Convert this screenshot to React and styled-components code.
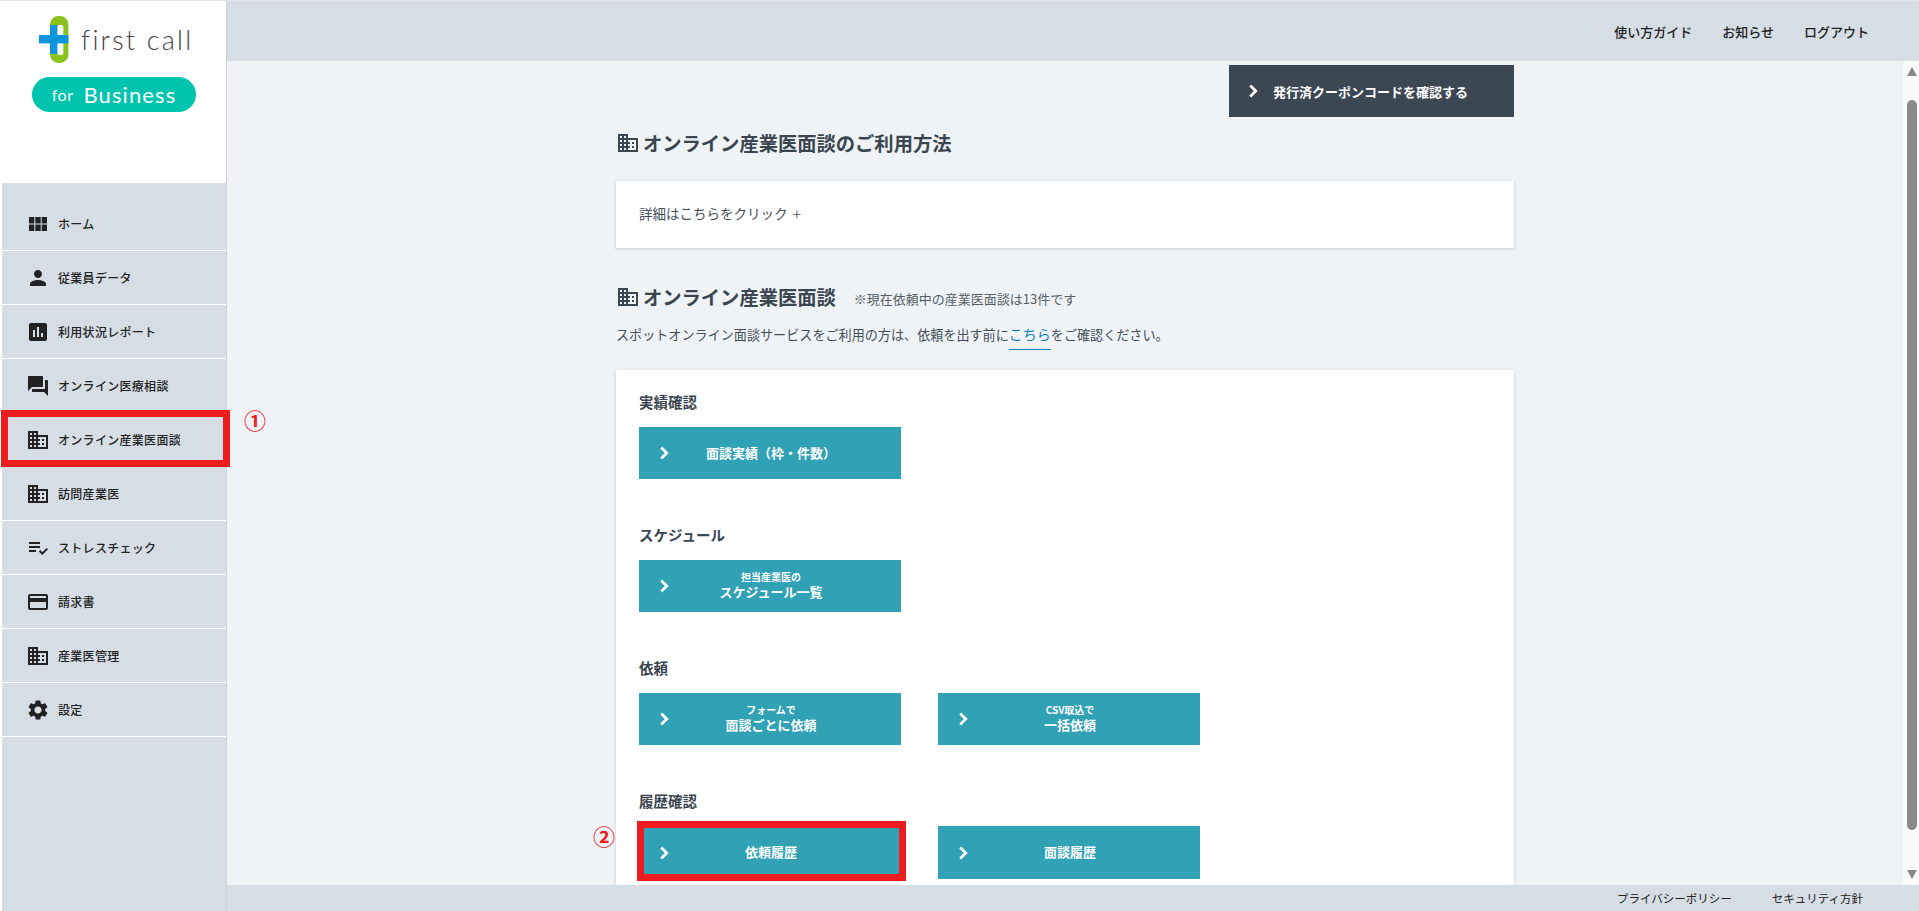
import React from "react";
import styled, { createGlobalStyle } from "styled-components";
import {
  MdViewModule,
  MdPerson,
  MdAssessment,
  MdQuestionAnswer,
  MdDomain,
  MdPlaylistAddCheck,
  MdCreditCard,
  MdSettings,
} from "react-icons/md";

const Global = createGlobalStyle`
  html, body, #root { margin: 0; height: 100%; }
  body {
    overflow: hidden;
    font-family: "Noto Sans CJK JP", "Noto Sans", sans-serif;
    color: #3a4550;
  }
  * { box-sizing: border-box; }
`;

const RED = "#ec1c1f";

const Page = styled.div`
  height: 911px;
  border-top: 1px solid #e4e4e4;
  display: grid;
  grid-template-columns: 227px 1fr;
  background: #fff;
`;

const Side = styled.aside`
  display: flex;
  flex-direction: column;
  padding-left: 2px;
  border-right: 1px solid #cfd2d6;
  height: 910px;
`;

const LogoBox = styled.div`
  height: 182px;
  margin-left: -2px;
  padding: 15px 0 0 32px;
  background: #fff;
`;

const LogoRow = styled.div`
  display: flex;
  align-items: center;
  gap: 12px;
  padding-left: 7px;
`;

const LogoName = styled.span`
  font-family: "Lato", sans-serif;
  font-weight: 300;
  font-size: 27px;
  letter-spacing: 2.2px;
  color: #4a4141;
  line-height: 1;
`;

const Pill = styled.div`
  width: 164px;
  height: 35px;
  margin-top: 14px;
  border-radius: 18px;
  background: #00c4ae;
  color: #fff;
  font-family: "Lato", sans-serif;
  display: flex;
  align-items: center;
  justify-content: center;
  gap: 10px;
`;

const PillSmall = styled.span`
  font-size: 16px;
  letter-spacing: 0.5px;
`;

const PillBig = styled.span`
  font-size: 22px;
  letter-spacing: 1.1px;
`;

const Nav = styled.nav`
  flex: 1;
  background: #d6dde5;
  padding-top: 14px;
  width: 224px;
`;

const NavRow = styled.a`
  position: relative;
  display: flex;
  align-items: center;
  height: 54px;
  padding-left: 24px;
  border-bottom: 1px solid #fff;
  color: #222;
  font-size: 12px;
  font-weight: 500;
  letter-spacing: 0.3px;
  svg {
    width: 24px;
    height: 24px;
    margin-right: 8px;
    color: #222;
    flex: none;
  }
`;

const NavBox = styled.span`
  position: absolute;
  left: -1px;
  right: -4px;
  top: -3px;
  bottom: -1px;
  border: 7px solid ${RED};
`;

const Mark = styled.span`
  position: absolute;
  color: ${RED};
  font-size: 22px;
  line-height: 1;
  font-weight: 700;
`;

const NavMark = styled(Mark)`
  left: 242px;
  top: -5px;
`;

const Right = styled.div`
  display: flex;
  flex-direction: column;
  height: 910px;
  min-width: 0;
`;

const Top = styled.header`
  height: 60px;
  flex: none;
  background: #d6dde5;
  display: flex;
  align-items: center;
  justify-content: flex-end;
  gap: 30px;
  padding-right: 50px;
  font-size: 13px;
  font-weight: 500;
  color: #222;
`;

const Middle = styled.div`
  flex: 1;
  min-height: 0;
  display: flex;
`;

const Main = styled.main`
  flex: 1;
  min-width: 0;
  overflow: hidden;
  background: #eff3f6;
  padding: 4px 0 0 389px;
`;

const Col = styled.div`
  width: 898px;
`;

const CouponRow = styled.div`
  display: flex;
  justify-content: flex-end;
`;

const Coupon = styled.a`
  width: 285px;
  height: 52px;
  background: #3b4753;
  color: #fff;
  font-size: 13px;
  font-weight: 700;
  display: flex;
  align-items: center;
  padding-left: 13px;
  gap: 9px;
`;

const Chevron = styled.svg.attrs({ viewBox: "0 0 24 24" })`
  width: 22px;
  height: 22px;
  flex: none;
  fill: none;
  stroke: currentColor;
  stroke-width: 3;
`;

const BtnChevron = styled(Chevron)`
  position: absolute;
  left: 14px;
  top: 50%;
  transform: translateY(-50%);
`;

const Title = styled.h2`
  margin: ${(p) => p.$top}px 0 0 1px;
  display: flex;
  align-items: center;
  height: 28px;
  font-size: 19.3px;
  font-weight: 700;
  color: #3a4550;
  white-space: nowrap;
  svg { width: 24px; height: 24px; margin-right: 3px; margin-left: -1px; flex: none; }
`;

const Note = styled.span`
  margin-left: 18px;
  font-size: 13px;
  font-weight: 400;
  color: #555e67;
  position: relative;
  top: 1px;
`;

const Panel = styled.section`
  background: #fff;
  box-shadow: 0 1px 3px rgba(60, 70, 80, 0.22);
`;

const DetailPanel = styled(Panel)`
  margin-top: 24px;
  height: 67px;
  padding: 0 23px 3px;
  display: flex;
  align-items: center;
  font-size: 13.5px;
  color: #444e58;
`;

const Plus = styled.span`
  margin-left: 5px;
  font-size: 16px;
  font-weight: 300;
`;

const Lead = styled.p`
  margin: 13px 0 0;
  font-size: 13.1px;
  line-height: 20px;
  color: #444e58;
`;

const LeadLink = styled.a`
  color: #1480b8;
  font-size: 14px;
  padding-bottom: 5px;
  border-bottom: 1px solid #1480b8;
`;

const ButtonPanel = styled(Panel)`
  margin-top: 25px;
  padding: 19px 23px 40px;
`;

const Group = styled.div`
  height: 133px;
`;

const GroupHead = styled.h3`
  margin: 0;
  height: 26px;
  line-height: 26px;
  font-size: 14.5px;
  font-weight: 700;
  color: #3a4550;
`;

const Buttons = styled.div`
  margin-top: 12px;
  display: flex;
  gap: 37px;
`;

const Btn = styled.a`
  position: relative;
  width: 262px;
  height: ${(p) => (p.$tall ? 53 : 52)}px;
  background: #31a1b5;
  color: #fff;
  display: flex;
  align-items: center;
  justify-content: center;
  font-size: 13px;
  font-weight: 700;
`;

const BtnText = styled.span`
  display: flex;
  flex-direction: column;
  align-items: center;
  padding-left: 2px;
  line-height: 1.25;
`;

const BtnSmall = styled.small`
  font-size: 10px;
  font-weight: 700;
  line-height: 12px;
`;

const BtnBig = styled.span`
  font-size: 13px;
  font-weight: 700;
  line-height: 18px;
`;

const BtnBox = styled.span`
  position: absolute;
  left: -2px;
  right: -5px;
  top: -5px;
  bottom: -2px;
  border: 7px solid ${RED};
`;

const BtnMark = styled(Mark)`
  left: -46px;
  top: -2px;
`;

const Bar = styled.div`
  width: 16px;
  flex: none;
  background: #fafafa;
  display: flex;
  flex-direction: column;
  align-items: center;
  padding: 6px 0 5px;
`;

const Arrow = styled.span`
  width: 0;
  height: 0;
  margin-left: 1px;
  border-left: 5.5px solid transparent;
  border-right: 5.5px solid transparent;
  ${(p) => (p.$down ? "border-top" : "border-bottom")}: 9px solid #8a8a8a;
`;

const Thumb = styled.div`
  width: 10px;
  height: 730px;
  margin: 24px 0 40px 1px;
  border-radius: 5px;
  background: #8a8a8a;
`;

const Bottom = styled.footer`
  height: 26px;
  flex: none;
  background: #d6dde5;
  display: flex;
  align-items: center;
  justify-content: flex-end;
  gap: 40px;
  padding-right: 56px;
  font-size: 11.5px;
  color: #222;
`;

const Cross = () => (
  <svg width="30" height="47" viewBox="0 0 30 47">
    <rect x="11" y="0" width="18.4" height="47" rx="8.5" fill="#8cc220" />
    <rect x="18.3" y="9" width="6" height="14" rx="2" fill="#fff" />
    <rect x="18.3" y="24" width="6" height="15" rx="2" fill="#fff" />
    <rect x="11" y="9" width="7.3" height="29" fill="#0f95de" />
    <rect x="0" y="19" width="29.4" height="8.4" fill="#0f95de" />
  </svg>
);

const navItems = [
  ["ホーム", MdViewModule],
  ["従業員データ", MdPerson],
  ["利用状況レポート", MdAssessment],
  ["オンライン医療相談", MdQuestionAnswer],
  ["オンライン産業医面談", MdDomain, true],
  ["訪問産業医", MdDomain],
  ["ストレスチェック", MdPlaylistAddCheck],
  ["請求書", MdCreditCard],
  ["産業医管理", MdDomain],
  ["設定", MdSettings],
];

const groups = [
  { head: "実績確認", buttons: [{ text: "面談実績（枠・件数）" }] },
  { head: "スケジュール", buttons: [{ small: "担当産業医の", text: "スケジュール一覧" }] },
  {
    head: "依頼",
    buttons: [
      { small: "フォームで", text: "面談ごとに依頼" },
      { small: "CSV取込で", text: "一括依頼" },
    ],
  },
  {
    head: "履歴確認",
    buttons: [{ text: "依頼履歴", marked: true }, { text: "面談履歴" }],
  },
];

export default function App() {
  return (
    <Page>
      <Global />
      <Side>
        <LogoBox>
          <LogoRow>
            <Cross />
            <LogoName>first call</LogoName>
          </LogoRow>
          <Pill>
            <PillSmall>for</PillSmall>
            <PillBig>Business</PillBig>
          </Pill>
        </LogoBox>
        <Nav>
          {navItems.map(([label, Icon, marked]) => (
            <NavRow key={label}>
              <Icon />
              {label}
              {marked && <NavBox />}
              {marked && <NavMark>①</NavMark>}
            </NavRow>
          ))}
        </Nav>
      </Side>
      <Right>
        <Top>
          <span>使い方ガイド</span>
          <span>お知らせ</span>
          <span>ログアウト</span>
        </Top>
        <Middle>
          <Main>
            <Col>
              <CouponRow>
                <Coupon>
                  <Chevron>
                    <path d="M9 6l6 6-6 6" />
                  </Chevron>
                  発行済クーポンコードを確認する
                </Coupon>
              </CouponRow>
              <Title $top={12}>
                <MdDomain />
                オンライン産業医面談のご利用方法
              </Title>
              <DetailPanel>
                詳細はこちらをクリック<Plus>+</Plus>
              </DetailPanel>
              <Title $top={35}>
                <MdDomain />
                オンライン産業医面談
                <Note>※現在依頼中の産業医面談は13件です</Note>
              </Title>
              <Lead>
                スポットオンライン面談サービスをご利用の方は、依頼を出す前に
                <LeadLink>こちら</LeadLink>をご確認ください。
              </Lead>
              <ButtonPanel>
                {groups.map((g) => (
                  <Group key={g.head}>
                    <GroupHead>{g.head}</GroupHead>
                    <Buttons>
                      {g.buttons.map((b) => (
                        <Btn key={b.text} $tall={g.head === "履歴確認"}>
                          <BtnChevron>
                            <path d="M9 6l6 6-6 6" />
                          </BtnChevron>
                          <BtnText>
                            {b.small && <BtnSmall>{b.small}</BtnSmall>}
                            {b.small ? <BtnBig>{b.text}</BtnBig> : b.text}
                          </BtnText>
                          {b.marked && <BtnBox />}
                          {b.marked && <BtnMark>②</BtnMark>}
                        </Btn>
                      ))}
                    </Buttons>
                  </Group>
                ))}
              </ButtonPanel>
            </Col>
          </Main>
          <Bar>
            <Arrow />
            <Thumb />
            <Arrow $down />
          </Bar>
        </Middle>
        <Bottom>
          <span>プライバシーポリシー</span>
          <span>セキュリティ方針</span>
        </Bottom>
      </Right>
    </Page>
  );
}
